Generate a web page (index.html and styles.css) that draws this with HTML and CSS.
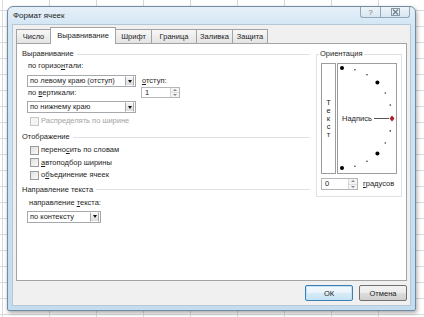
FILE: index.html
```html
<!DOCTYPE html>
<html lang="ru">
<head>
    <meta charset="UTF-8">
    <meta name="viewport" content="width=device-width, initial-scale=1.0">
    <title>Формат ячеек</title>
    <link rel="stylesheet" href="styles.css">
</head>
<body>
    <div class="window">
        <div class="titlebar">
            <span class="title">Формат ячеек</span>
            <div class="caption-buttons">
                <span class="cap-btn help">?</span>
                <span class="cap-btn close">
                    <svg width="9" height="8" viewBox="0 0 9 8">
                        <rect x="0.5" y="0.5" width="8" height="7" fill="none" stroke="#8a98a6"/>
                        <path d="M2 1.5 L7 6.5 M7 1.5 L2 6.5" stroke="#6f7e8c" stroke-width="1.2"/>
                    </svg>
                </span>
            </div>
        </div>

        <div class="client">
            <div class="tabs">
                <span class="tab w1">Число</span>
                <span class="tab w2 active">Выравнивание</span>
                <span class="tab w3">Шрифт</span>
                <span class="tab w4">Граница</span>
                <span class="tab w5">Заливка</span>
                <span class="tab w6">Защита</span>
            </div>

            <div class="panel">
                <div class="left">
                    <div class="group-title">Выравнивание</div>
                    <div class="align-grid">
                        <div class="col-main">
                            <div class="label">по горизо<u>н</u>тали:</div>
                            <div class="combo combo-1">
                                <span class="combo-text">по левому краю (отступ)</span>
                                <span class="drop"><i></i></span>
                            </div>
                            <div class="label">по <u>в</u>ертикали:</div>
                            <div class="combo combo-2">
                                <span class="combo-text">по нижнему краю</span>
                                <span class="drop"><i></i></span>
                            </div>
                        </div>
                        <div class="col-indent">
                            <div class="label"><u>о</u>тступ:</div>
                            <div class="spin">
                                <span class="spin-text">1</span>
                                <span class="spin-btns"><i class="up"></i><i class="down"></i></span>
                            </div>
                        </div>
                    </div>
                    <div class="check disabled"><span class="box"></span><span>Распределять по ширине</span></div>

                    <div class="group-title gt-display">Отображение</div>
                    <div class="checks">
                        <div class="check"><span class="box"></span><span>перено<u>с</u>ить по словам</span></div>
                        <div class="check"><span class="box"></span><span><u>а</u>втоподбор ширины</span></div>
                        <div class="check"><span class="box"></span><span>о<u>б</u>ъединение ячеек</span></div>
                    </div>

                    <div class="group-title gt-direction">Направление текста</div>
                    <div class="label label-dir">направление <u>т</u>екста:</div>
                    <div class="combo combo-3">
                        <span class="combo-text">по контексту</span>
                        <span class="drop"><i></i></span>
                    </div>
                </div>

                <div class="orient">
                    <div class="orient-title"><span>Ориентация</span></div>
                    <div class="orient-boxes">
                        <div class="vertical-text">
                            <span>Т</span><span>е</span><span>к</span><span>с</span><span>т</span>
                        </div>
                        <div class="dial">
                            <svg width="58" height="109" viewBox="0 0 58 109">
                                <g fill="#000">
                                    <circle cx="4" cy="4" r="2"/>
                                    <circle cx="39.4" cy="18.6" r="2"/>
                                    <circle cx="39.4" cy="89.4" r="2"/>
                                    <circle cx="4" cy="104" r="2"/>
                                </g>
                                <g fill="#333">
                                    <circle cx="16.9" cy="5.7" r="0.8"/>
                                    <circle cx="29" cy="10.7" r="0.8"/>
                                    <circle cx="47.3" cy="29" r="0.8"/>
                                    <circle cx="52.3" cy="41.1" r="0.8"/>
                                    <circle cx="52.3" cy="66.9" r="0.8"/>
                                    <circle cx="47.3" cy="79" r="0.8"/>
                                    <circle cx="29" cy="97.3" r="0.8"/>
                                    <circle cx="16.9" cy="102.3" r="0.8"/>
                                </g>
                                <text class="dial-label" x="4" y="57">Надпись</text>
                                <line x1="36" y1="54.5" x2="51" y2="54.5" stroke="#555" stroke-width="1"/>
                                <polygon points="54,51.5 56.5,54.5 54,57.5 51.5,54.5" fill="#a8202c"/>
                            </svg>
                        </div>
                    </div>
                    <div class="degrees">
                        <div class="spin spin-deg">
                            <span class="spin-text">0</span>
                            <span class="spin-btns"><i class="up"></i><i class="down"></i></span>
                        </div>
                        <span class="label"><u>г</u>радусов</span>
                    </div>
                </div>
            </div>

            <div class="footer">
                <button class="btn btn-default">ОК</button>
                <button class="btn">Отмена</button>
            </div>
        </div>
    </div>
</body>
</html>
```

FILE: styles.css
```css
body {
    margin: 0;
    width: 424px;
    height: 317px;
    overflow: hidden;
    font-family: "Liberation Sans", Arial, sans-serif;
    font-size: 7.5px;
    color: #1e1e1e;
    background-color: #fff;
    /* spreadsheet grid behind the dialog */
    background-image:
        linear-gradient(to right, #d9dadb 1px, transparent 1px),
        linear-gradient(to bottom, #d9dadb 1px, transparent 1px);
    background-size: 47px 100%, 100% 16px;
    background-position: 2px 0, 0 10px;
}

.window {
    margin: 6px 0 0 7px;
    width: 409px;
    height: 305px;
    box-sizing: border-box;
    border: 1px solid #6f8ca4;
    border-radius: 6px 6px 2px 2px;
    background: linear-gradient(#e6f0f8, #d3e6f4 18px, #c3dcee);
    padding: 0 4px 4px;
    display: flex;
    flex-direction: column;
    box-shadow: 1px 2px 4px rgba(0, 0, 0, 0.35);
}

.titlebar {
    height: 17px;
    flex: none;
    display: flex;
    justify-content: space-between;
    align-items: flex-start;
}

.title {
    line-height: 17px;
    font-size: 8px;
    padding-left: 1px;
    color: #1e1e1e;
}

.caption-buttons {
    display: flex;
    margin-right: 1px;
}

.cap-btn {
    height: 11px;
    box-sizing: border-box;
    border: 1px solid #93a9bb;
    border-top: none;
    background: linear-gradient(#eef4f9, #d8e6f1);
    display: flex;
    align-items: center;
    justify-content: center;
    color: #6f7e8c;
}

.help {
    width: 20px;
    border-radius: 0 0 0 3px;
    font-size: 8px;
    border-right: none;
}

.close {
    width: 30px;
    border-radius: 0 0 3px 0;
}

.client {
    flex: 1;
    background: #f0f0f0;
    border: 1px solid #b4c8d8;
    padding: 4px 3px 0 3px;
    display: flex;
    flex-direction: column;
}

.tabs {
    display: flex;
    height: 14px;
    align-items: flex-end;
}

.tab {
    height: 14px;
    box-sizing: border-box;
    border: 1px solid #a3a3a3;
    border-bottom: none;
    margin-right: -1px;
    background: linear-gradient(#f7f7f7, #e4e4e4);
    text-align: center;
    line-height: 13px;
}

.tab.active {
    height: 17px;
    margin-bottom: -1px;
    background: #fff;
    position: relative;
    z-index: 1;
    line-height: 15px;
}

.w1 { width: 35px; }
.w2 { width: 66px; }
.w3 { width: 37px; }
.w4 { width: 46px; }
.w5 { width: 37px; }
.w6 { width: 36px; }

.panel {
    height: 238px;
    box-sizing: border-box;
    background: #fff;
    border: 1px solid #a3a3a3;
    padding: 4px 4px 0 5px;
    display: flex;
    gap: 6px;
    align-items: flex-start;
}

.left {
    width: 288px;
}

.group-title {
    height: 12px;
    line-height: 12px;
    display: flex;
    align-items: center;
    gap: 3px;
}

.group-title::after {
    content: "";
    flex: 1;
    height: 1px;
    background: #dde2e6;
}

.gt-display {
    margin-top: 4px;
}

.gt-direction {
    margin-top: 2px;
}

.label {
    height: 12px;
    line-height: 12px;
    padding-left: 1px;
}

.align-grid {
    display: flex;
    gap: 5px;
    margin-left: 5px;
}

.col-main {
    width: 109px;
}

.col-indent {
    width: 39px;
    padding-top: 15px;
}

.combo {
    height: 12px;
    box-sizing: border-box;
    border: 1px solid #a5a9ae;
    background: #fff;
    display: flex;
    align-items: stretch;
}

.combo-1 { margin-top: 3px; }
.combo-2 { margin-top: 2px; }

.combo-3 {
    width: 74px;
    margin: 2px 0 0 5px;
}

.combo-text {
    flex: 1;
    padding-left: 2px;
    line-height: 10px;
    white-space: nowrap;
    overflow: hidden;
}

.drop {
    width: 9px;
    margin: 0 1px 0 0;
    box-sizing: border-box;
    border: 1px solid #a8a8a8;
    border-top-color: #fff;
    border-bottom-color: #fff;
    background: linear-gradient(#f6f6f6, #dcdcdc);
    display: flex;
    align-items: center;
    justify-content: center;
}

.drop i {
    width: 0;
    height: 0;
    border-left: 2.5px solid transparent;
    border-right: 2.5px solid transparent;
    border-top: 3px solid #111;
}

.spin {
    height: 11px;
    box-sizing: border-box;
    border: 1px solid #b3b6ba;
    background: #fff;
    display: flex;
}

.spin-text {
    flex: 1;
    padding-left: 3px;
    line-height: 9px;
}

.spin-btns {
    width: 8px;
    display: flex;
    flex-direction: column;
    border-left: 1px solid #d6d6d6;
    background: #f4f4f4;
}

.spin-btns i {
    flex: 1;
    display: flex;
    align-items: center;
    justify-content: center;
}

.spin-btns i::before {
    content: "";
    border-left: 2px solid transparent;
    border-right: 2px solid transparent;
}

.spin-btns .up::before { border-bottom: 2px solid #8a8a8a; }
.spin-btns .down::before { border-top: 2px solid #8a8a8a; }

.spin-btns .up {
    border-bottom: 1px solid #dedede;
}

.check {
    height: 12px;
    line-height: 12px;
    display: flex;
    align-items: center;
    gap: 2px;
    padding-left: 8px;
    margin-top: 2px;
}

.checks .check {
    height: 12.5px;
    margin-top: 0;
}

.checks {
    margin-top: 1px;
}

.box {
    width: 9px;
    height: 9px;
    box-sizing: border-box;
    border: 1px solid #9a9b9c;
    background: linear-gradient(135deg, #e0e0e0, #f9f9f9);
}

.check.disabled {
    color: #a3a3a3;
}

.check.disabled .box {
    border-color: #c8c8c8;
    background: #f4f4f4;
}

.label-dir {
    margin: 1px 0 0 6px;
}

/* orientation group */
.orient {
    width: 86px;
    box-sizing: border-box;
    margin-top: 6px;
    border: 1px solid #dde2e6;
    padding: 0 4px 6px 4px;
}

.orient-title {
    margin: -7px 0 0 -2px;
    height: 12px;
    line-height: 12px;
}

.orient-title span {
    background: #fff;
    padding: 0 1px;
}

.orient-boxes {
    display: flex;
    margin-top: 3px;
    height: 111px;
}

.vertical-text {
    width: 17px;
    box-sizing: border-box;
    border: 1px solid #9d9d9d;
    display: flex;
    flex-direction: column;
    align-items: center;
    justify-content: center;
    line-height: 8px;
}

.dial {
    width: 60px;
    box-sizing: border-box;
    border: 1px solid #9d9d9d;
    margin-left: 1px;
}

.dial svg {
    display: block;
}

.dial-label {
    font-family: "Liberation Sans", Arial, sans-serif;
    font-size: 7.5px;
    fill: #1e1e1e;
}

.degrees {
    display: flex;
    align-items: center;
    gap: 4px;
    margin-top: 4px;
}

.spin-deg {
    width: 37px;
    height: 12px;
}

.spin-deg .spin-text {
    line-height: 10px;
}

.footer {
    display: flex;
    justify-content: flex-end;
    gap: 6px;
    padding-top: 4px;
}

.btn {
    width: 48px;
    height: 16px;
    padding: 0;
    border: 1px solid #707070;
    border-radius: 2px;
    background: linear-gradient(#f2f2f2 0%, #ebebeb 50%, #dddddd 51%, #cfcfcf 100%);
    font-family: "Liberation Sans", Arial, sans-serif;
    font-size: 7.5px;
    color: #1e1e1e;
}

.btn-default {
    border-color: #3c7fb1;
    background: linear-gradient(#f4f9fc 0%, #e8f3fa 50%, #d6ebf7 51%, #c9e4f3 100%);
    box-shadow: inset 0 0 0 1px #bfe3f8;
}
```
